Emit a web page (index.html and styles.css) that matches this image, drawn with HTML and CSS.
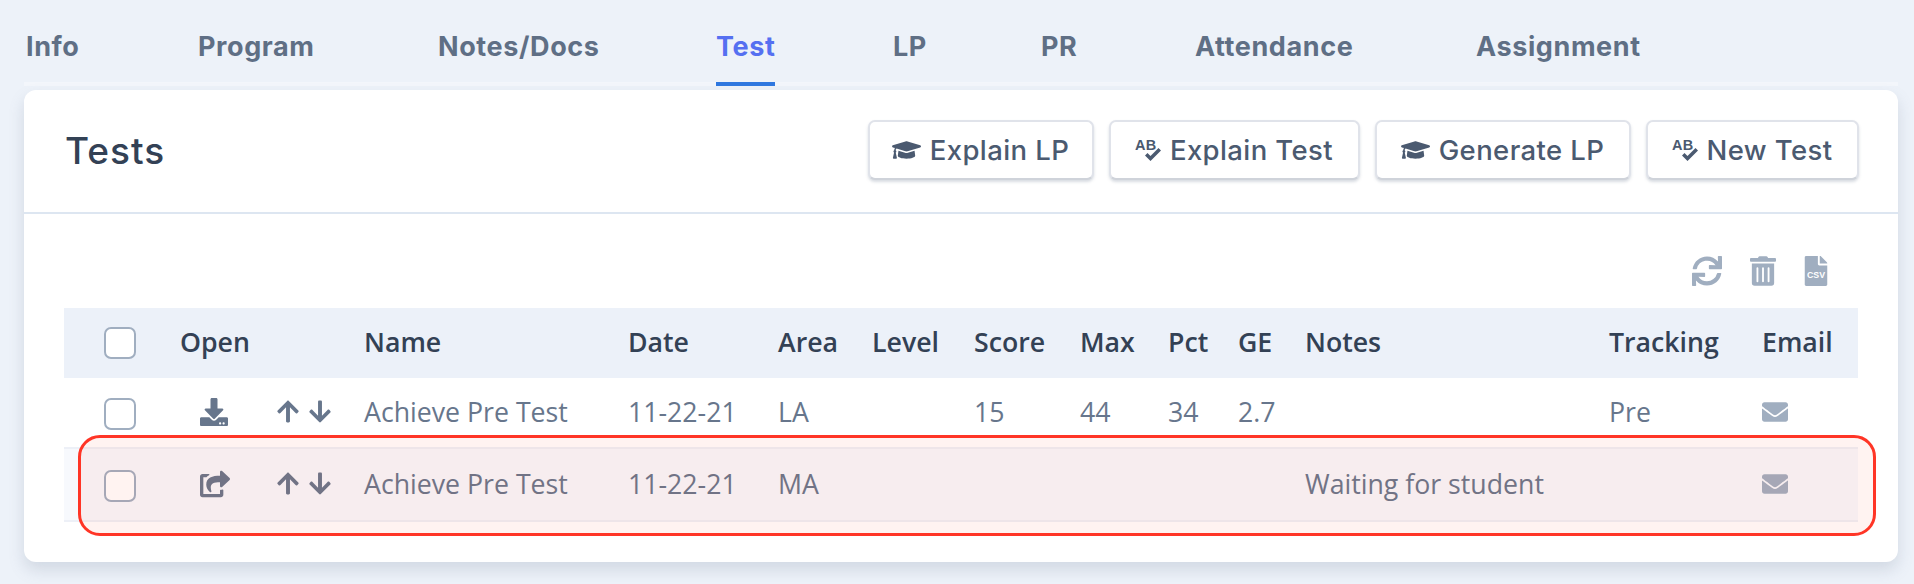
FILE: index.html
```html
<!DOCTYPE html>
<html lang="en">
<head>
  <meta charset="UTF-8" />
  <title>Tests</title>
  <link rel="stylesheet" href="styles.css">
</head>
<body>
  <svg class="sprite" xmlns="http://www.w3.org/2000/svg">
    <symbol id="i-cap" viewBox="0 0 640 512"><path d="M622.34 153.2L343.4 67.5c-15.2-4.67-31.6-4.67-46.79 0L17.66 153.2c-23.54 7.23-23.54 38.36 0 45.59l48.63 14.94c-10.67 13.19-17.23 29.28-17.88 46.9C38.78 266.15 32 276.11 32 288c0 10.78 5.68 19.85 13.86 25.65L20.33 428.53C18.11 438.52 25.71 448 35.94 448h56.11c10.24 0 17.84-9.48 15.62-19.47L82.14 313.65C90.32 307.85 96 298.78 96 288c0-11.57-6.47-21.25-15.66-26.87.76-15.02 8.44-28.3 20.69-36.72L296.6 284.5c9.06 2.78 26.44 6.25 46.79 0l278.95-85.7c23.55-7.24 23.55-38.36 0-45.6zM352.79 315.09c-28.53 8.76-52.84 3.92-65.59 0l-145.02-44.55L128 384c0 35.35 85.96 64 192 64s192-28.65 192-64l-14.18-113.47-145.03 44.56z"/></symbol>
    <symbol id="i-spell" viewBox="0 0 26 23"><text x="0" y="11" font-family="Liberation Sans" font-weight="700" font-size="14.5">AB</text><path d="M10 16.5l2.5-2.5 3 3 8-8 2.5 2.5L15.5 22z"/></symbol>
    <symbol id="i-download" viewBox="0 0 512 512"><path d="M216 0h80c13.3 0 24 10.7 24 24v168h87.7c17.8 0 26.7 21.5 14.1 34.1L269.7 378.3c-7.5 7.5-19.8 7.5-27.3 0L90.1 226.1c-12.6-12.6-3.7-34.1 14.1-34.1H192V24c0-13.3 10.7-24 24-24zm296 376v112c0 13.3-10.7 24-24 24H24c-13.3 0-24-10.7-24-24V376c0-13.3 10.7-24 24-24h146.7l49 49c20.1 20.1 52.5 20.1 72.6 0l49-49H488c13.3 0 24 10.7 24 24zm-124 88c0-11-9-20-20-20s-20 9-20 20 9 20 20 20 20-9 20-20zm64 0c0-11-9-20-20-20s-20 9-20 20 9 20 20 20 20-9 20-20z"/></symbol>
    <symbol id="i-share" viewBox="0 0 576 512"><path d="M568.482 177.448L424.479 313.433C409.3 327.768 384 317.14 384 295.985v-71.963c-144.575.97-205.566 35.113-164.775 171.353 4.483 14.973-12.846 26.567-25.006 17.33C155.252 383.105 120 326.488 120 269.339c0-143.937 117.599-172.5 264-173.312V24.012c0-21.174 25.317-31.768 40.479-17.448l144.003 135.988c10.02 9.463 10.028 25.425 0 34.896zM384 379.128V448H64V128h50.916a11.99 11.99 0 0 0 8.648-3.693c14.953-15.568 32.237-27.89 51.014-37.676C186.708 80.83 183.95 64 169.033 64H48C21.49 64 0 85.49 0 112v352c0 26.51 21.49 48 48 48h352c26.51 0 48-21.49 48-48v-88.806c0-8.288-8.197-14.066-16.011-11.302a71.83 71.83 0 0 1-34.189 3.377c-7.27-1.046-13.8 4.576-13.8 11.859z"/></symbol>
    <symbol id="i-up" viewBox="0 0 448 512"><path d="M34.9 289.5l-22.2-22.2c-9.4-9.4-9.4-24.6 0-33.9L207 39c9.4-9.4 24.6-9.4 33.9 0l194.3 194.3c9.4 9.4 9.4 24.6 0 33.9L413 289.4c-9.5 9.5-25 9.3-34.3-.4L264 168.6V456c0 13.3-10.7 24-24 24h-32c-13.3 0-24-10.7-24-24V168.6L69.2 289.1c-9.3 9.8-24.8 10-34.3.4z"/></symbol>
    <symbol id="i-down" viewBox="0 0 448 512"><path d="M413.1 222.5l22.2 22.2c9.4 9.4 9.4 24.6 0 33.9L241 473c-9.4 9.4-24.6 9.4-33.9 0L12.7 278.6c-9.4-9.4-9.4-24.6 0-33.9l22.2-22.2c9.5-9.5 25-9.3 34.3.4L184 343.4V56c0-13.3 10.7-24 24-24h32c13.3 0 24 10.7 24 24v287.4l114.8-120.5c9.3-9.8 24.8-10 34.3-.4z"/></symbol>
    <symbol id="i-sync" viewBox="0 0 512 512"><path d="M440.65 12.57l4 82.77A247.16 247.16 0 0 0 255.83 8C134.73 8 33.91 94.92 12.29 209.82A12 12 0 0 0 24.09 224h49.05a12 12 0 0 0 11.67-9.26 175.91 175.91 0 0 1 317-56.94l-101.46-4.86a12 12 0 0 0-12.57 12v47.41a12 12 0 0 0 12 12H500a12 12 0 0 0 12-12V12a12 12 0 0 0-12-12h-47.37a12 12 0 0 0-11.98 12.57zM255.83 432a175.61 175.61 0 0 1-146-77.8l101.8 4.87a12 12 0 0 0 12.57-12v-47.4a12 12 0 0 0-12-12H12a12 12 0 0 0-12 12V500a12 12 0 0 0 12 12h47.35a12 12 0 0 0 12-12.6l-4.15-82.57A247.17 247.17 0 0 0 255.83 504c121.11 0 221.93-86.92 243.55-201.82a12 12 0 0 0-11.8-14.18h-49.05a12 12 0 0 0-11.67 9.26A175.86 175.86 0 0 1 255.83 432z"/></symbol>
    <symbol id="i-trash" viewBox="0 0 448 512"><path d="M32 464a48 48 0 0 0 48 48h288a48 48 0 0 0 48-48V128H32zm272-256a16 16 0 0 1 32 0v224a16 16 0 0 1-32 0zm-96 0a16 16 0 0 1 32 0v224a16 16 0 0 1-32 0zm-96 0a16 16 0 0 1 32 0v224a16 16 0 0 1-32 0zM432 32H312l-9.4-18.7A24 24 0 0 0 281.1 0H166.8a23.72 23.72 0 0 0-21.4 13.3L136 32H16A16 16 0 0 0 0 48v32a16 16 0 0 0 16 16h416a16 16 0 0 0 16-16V48a16 16 0 0 0-16-16z"/></symbol>
    <symbol id="i-csv" viewBox="0 0 384 512"><path d="M224 136V0H24C10.7 0 0 10.7 0 24v464c0 13.3 10.7 24 24 24h336c13.3 0 24-10.7 24-24V160H248c-13.2 0-24-10.8-24-24z"/><path d="M377 105L279.1 7c-4.5-4.5-10.6-7-17-7H256v128h128v-6.1c0-6.3-2.5-12.4-7-16.9z"/><text x="192" y="375" text-anchor="middle" font-family="Liberation Sans" font-weight="700" font-size="150" fill="#fff">CSV</text></symbol>
    <symbol id="i-mail" viewBox="0 0 512 512"><path d="M502.3 190.8c3.9-3.1 9.7-.2 9.7 4.7V400c0 26.5-21.5 48-48 48H48c-26.5 0-48-21.5-48-48V195.6c0-5 5.7-7.8 9.7-4.7 22.4 17.4 52.1 39.5 154.1 113.6 21.1 15.4 56.7 47.8 92.2 47.6 35.7.3 71-32.8 92.3-47.6 102-74.1 131.6-96.3 154-113.7zM256 320c23.2.4 56.6-29.2 73.4-41.4 132.7-96.3 142.8-104.7 173.4-128.7 5.8-4.5 9.2-11.5 9.2-18.9v-19c0-26.5-21.5-48-48-48H48C21.5 64 0 85.5 0 112v19c0 7.4 3.4 14.3 9.2 18.9 30.6 23.9 40.7 32.4 173.4 128.7 16.8 12.2 50.2 41.8 73.4 41.4z"/></symbol>
  </svg>

  <nav class="tabs">
    <a href="#">Info</a>
    <a href="#">Program</a>
    <a href="#">Notes/Docs</a>
    <a href="#" class="active">Test</a>
    <a href="#">LP</a>
    <a href="#">PR</a>
    <a href="#">Attendance</a>
    <a href="#">Assignment</a>
  </nav>

  <main class="card">
    <header class="card-header">
      <h1>Tests</h1>
      <div class="actions">
        <button class="btn btn-lp"><svg class="btn-cap"><use href="#i-cap"/></svg>Explain LP</button>
        <button class="btn btn-et"><svg class="btn-spell"><use href="#i-spell"/></svg>Explain Test</button>
        <button class="btn btn-gl"><svg class="btn-cap"><use href="#i-cap"/></svg>Generate LP</button>
        <button class="btn btn-nt"><svg class="btn-spell"><use href="#i-spell"/></svg>New Test</button>
      </div>
    </header>

    <div class="card-body">
      <div class="tools">
        <svg class="tool-sync"><use href="#i-sync"/></svg>
        <svg class="tool-trash"><use href="#i-trash"/></svg>
        <svg class="tool-csv"><use href="#i-csv"/></svg>
      </div>

      <table>
        <colgroup>
          <col class="c-check"><col class="c-open"><col class="c-move"><col class="c-name">
          <col class="c-date"><col class="c-area"><col class="c-level"><col class="c-score">
          <col class="c-max"><col class="c-pct"><col class="c-ge"><col class="c-notes">
          <col class="c-track"><col class="c-email">
        </colgroup>
        <thead>
          <tr>
            <th><span class="check"></span></th>
            <th>Open</th><th></th><th>Name</th><th>Date</th><th>Area</th><th>Level</th>
            <th>Score</th><th>Max</th><th>Pct</th><th>GE</th><th>Notes</th><th>Tracking</th><th>Email</th>
          </tr>
        </thead>
        <tbody>
          <tr>
            <td><span class="check"></span></td>
            <td><svg class="ico-open"><use href="#i-download"/></svg></td>
            <td><div class="move"><svg><use href="#i-up"/></svg><svg><use href="#i-down"/></svg></div></td>
            <td>Achieve Pre Test</td><td>11-22-21</td><td>LA</td><td></td>
            <td>15</td><td>44</td><td>34</td><td>2.7</td><td></td><td>Pre</td>
            <td><svg class="ico-mail"><use href="#i-mail"/></svg></td>
          </tr>
          <tr class="alt">
            <td><span class="check"></span></td>
            <td><svg class="ico-open ico-share"><use href="#i-share"/></svg></td>
            <td><div class="move"><svg><use href="#i-up"/></svg><svg><use href="#i-down"/></svg></div></td>
            <td>Achieve Pre Test</td><td>11-22-21</td><td>MA</td><td></td>
            <td></td><td></td><td></td><td></td><td>Waiting for student</td><td></td>
            <td><svg class="ico-mail"><use href="#i-mail"/></svg></td>
          </tr>
        </tbody>
      </table>
    </div>

    <div class="highlight"></div>
  </main>
</body>
</html>
```

FILE: styles.css
```css
html, body {
  margin: 0;
  height: 584px;
  overflow: hidden;
}

body {
  background: #edf2f9;
  font-family: 'Open Sans', sans-serif;
  color: #67768c;
}

.sprite {
  display: none;
}

svg {
  fill: currentColor;
}

/* tabs */
.tabs {
  display: grid;
  grid-template-columns: 172px 240px 278px 177px 148px 154px 281px 1fr;
  justify-items: start;
  height: 82px;
  margin-left: 24px;
  margin-right: 16px;
  padding-left: 2px;
  border-bottom: 4px solid #f3f6fb;
}

.tabs a {
  height: 82px;
  border-bottom: 4px solid transparent;
  line-height: 93px;
  font-family: Inter, sans-serif;
  font-size: 27px;
  font-weight: 700;
  letter-spacing: 0.6px;
  color: #5f6f85;
  text-decoration: none;
}

.tabs a.active {
  color: #5570f1;
  border-bottom-color: #2f78e0;
}

/* card */
.card {
  position: relative;
  width: 1874px;
  height: 472px;
  margin: 4px 0 0 24px;
  background: #fff;
  border-radius: 12px;
  box-shadow: 0 8px 16px rgba(100, 116, 139, 0.2);
}

.card-header {
  display: flex;
  align-items: center;
  justify-content: space-between;
  box-sizing: border-box;
  height: 124px;
  padding: 31px 39.5px 33px 41px;
  border-bottom: 2px solid #dde6f1;
}

h1 {
  margin: 0;
  font-family: Inter, sans-serif;
  font-size: 37px;
  font-weight: 500;
  letter-spacing: 1px;
  color: #334155;
}

.actions {
  display: flex;
  gap: 15px;
}

.btn {
  display: flex;
  align-items: center;
  justify-content: center;
  gap: 9px;
  height: 60px;
  padding: 0;
  background: #fff;
  border: 2px solid #e0e3ea;
  border-bottom-color: #cfd3da;
  border-radius: 7px;
  box-shadow: 0 2px 3px rgba(100, 116, 139, 0.25);
  font-family: Inter, sans-serif;
  font-size: 27.5px;
  font-weight: 500;
  letter-spacing: 0.4px;
  color: #4b5a70;
}

.btn-lp { width: 226px; }
.btn-et { width: 251px; }
.btn-gl { width: 256px; }
.btn-nt { width: 213px; }

.btn-cap {
  width: 29px;
  height: 24px;
}

.btn-spell {
  width: 26px;
  height: 23px;
}

/* table */
.card-body {
  padding: 0 40.5px 0 40px;
}

.tools {
  display: flex;
  justify-content: flex-end;
  align-items: center;
  box-sizing: border-box;
  height: 94px;
  padding-top: 20px;
  color: #a0aec0;
}

.tools svg {
  height: 30px;
}

.tool-sync {
  width: 30px;
  margin-right: 28px;
}

.tool-trash {
  width: 26px;
  margin-right: 28px;
}

.tool-csv {
  width: 24px;
  margin-right: 30px;
}

table {
  width: 1793.5px;
  table-layout: fixed;
  border-collapse: collapse;
}

.c-check { width: 116px; }
.c-open { width: 97px; }
.c-move { width: 87px; }
.c-name { width: 264px; }
.c-date { width: 150px; }
.c-area { width: 94px; }
.c-level { width: 102px; }
.c-score { width: 106px; }
.c-max { width: 88px; }
.c-pct { width: 70px; }
.c-ge { width: 67px; }
.c-notes { width: 304px; }
.c-track { width: 153px; }
.c-email { width: 95.5px; }

th, td {
  box-sizing: border-box;
  padding: 0;
  text-align: left;
  white-space: nowrap;
}

th {
  height: 70px;
  padding-bottom: 4px;
  background: #ecf1f9;
  font-size: 26.7px;
  font-weight: 600;
  color: #334155;
}

td {
  height: 70px;
  padding-bottom: 2px;
  font-size: 26.7px;
  color: #67768c;
}

tr.alt td {
  height: 73px;
  background: #f7f9fd;
  border-top: 2px solid #edf0f7;
  border-bottom: 2px solid #edf0f7;
}

.check {
  display: block;
  box-sizing: border-box;
  width: 32px;
  height: 32px;
  margin-left: 40px;
  background: #fff;
  border: 2px solid #a0aec0;
  border-radius: 7px;
}

th .check,
td .check {
  margin-top: 4px;
}

.ico-open {
  display: block;
  width: 28px;
  height: 28px;
  margin-left: 20px;
}

.ico-share {
  width: 30px;
}

.move {
  display: flex;
  align-items: center;
  gap: 10px;
}

.move svg {
  width: 22px;
  height: 25px;
}

.ico-mail {
  display: block;
  width: 26px;
  height: 26px;
  color: #a0aec0;
}

/* red box drawn over the second row */
.highlight {
  position: absolute;
  left: 53.5px;
  top: 344.5px;
  box-sizing: border-box;
  width: 1798px;
  height: 101px;
  background: rgba(255, 70, 50, 0.065);
  border: 3px solid #ff3526;
  border-radius: 22px;
}
```
